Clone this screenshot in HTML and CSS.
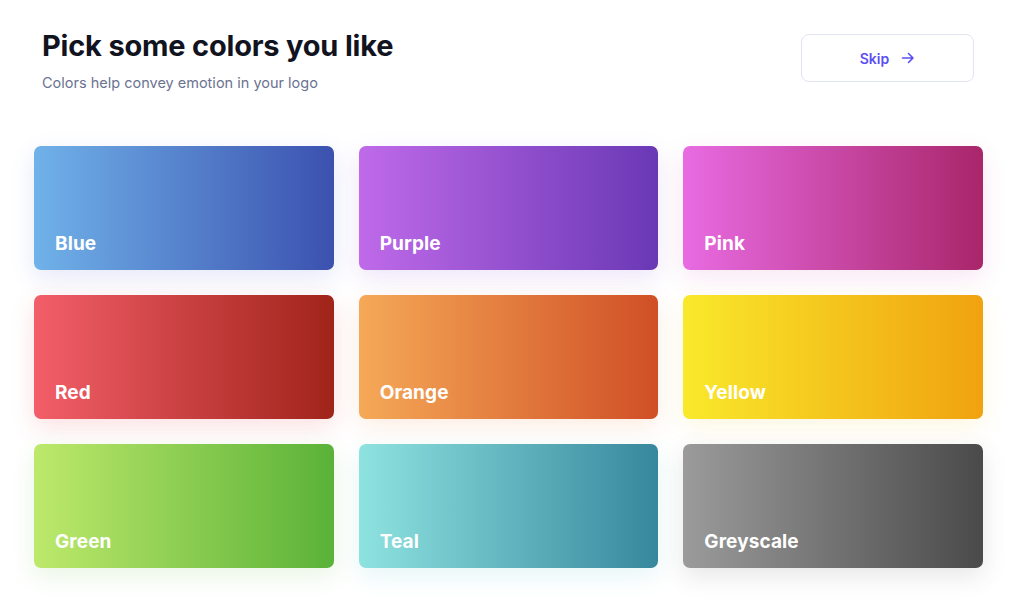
FILE: index.html
```html
<!DOCTYPE html>
<html>
<head>
<meta charset="utf-8">
<link rel="stylesheet" href="styles.css">
</head>
<body>
<div class="page">
  <header class="header">
    <div class="heading">
      <h1 class="title">Pick some colors you like</h1>
      <p class="subtitle">Colors help convey emotion in your logo</p>
    </div>
    <button class="skip">Skip
      <svg class="arrow" width="14" height="14" viewBox="0 0 14 14"><path d="M1.5 7H12M7.5 2.5L12 7L7.5 11.5" fill="none" stroke="currentColor" stroke-width="1.6" stroke-linecap="round" stroke-linejoin="round"/></svg>
    </button>
  </header>
  <div class="grid">
    <div class="card blue"><span>Blue</span></div>
    <div class="card purple"><span>Purple</span></div>
    <div class="card pink"><span>Pink</span></div>
    <div class="card red"><span>Red</span></div>
    <div class="card orange"><span>Orange</span></div>
    <div class="card yellow"><span>Yellow</span></div>
    <div class="card green"><span>Green</span></div>
    <div class="card teal"><span>Teal</span></div>
    <div class="card grey"><span>Greyscale</span></div>
  </div>
</div>
</body>
</html>
```
FILE: styles.css
```css
* { box-sizing: border-box; }
html, body { margin: 0; padding: 0; background: #fff; }
body { font-family: "Inter", "Lato", sans-serif; }
.page { width: 1024px; height: 602px; overflow: hidden; }
.header {
  display: flex;
  justify-content: space-between;
  align-items: flex-start;
  padding: 28px 50px 0 42px;
  height: 146px;
}
.title {
  margin: 0;
  font-size: 29px;
  font-weight: 700;
  color: #11131f;
  letter-spacing: -0.2px;
  line-height: 36px;
}
.subtitle {
  margin: 10px 0 0;
  font-size: 14.5px;
  color: #6b7390;
  line-height: 18px;
}
.skip {
  margin-top: 6px;
  width: 173px;
  height: 48px;
  border: 1px solid #e1e5f0;
  border-radius: 8px;
  background: #fff;
  color: #5a4ff2;
  font-family: inherit;
  font-size: 14px;
  font-weight: 600;
  display: flex;
  align-items: center;
  justify-content: center;
  gap: 12px;
  padding: 0;
}
.arrow { display: block; }
.grid {
  display: grid;
  grid-template-columns: repeat(3, 1fr);
  grid-auto-rows: 124px;
  gap: 25px;
  padding: 0 41px 0 34px;
}
.card {
  border-radius: 7px;
  display: flex;
  align-items: flex-end;
  padding: 0 0 15px 21px;
  color: #fff;
  font-size: 19px;
  font-weight: 700;
  letter-spacing: 0.1px;
}
.blue { background: linear-gradient(90deg, #70b2e9, #3b51af); box-shadow: 0 8px 24px rgba(70, 90, 210, 0.14); }
.purple { background: linear-gradient(90deg, #bf6ae9, #6a38b5); box-shadow: 0 8px 24px rgba(130, 70, 210, 0.14); }
.pink { background: linear-gradient(90deg, #e86be2, #a9266a); box-shadow: 0 8px 24px rgba(200, 60, 160, 0.12); }
.red { background: linear-gradient(90deg, #f35e69, #a0241a); box-shadow: 0 8px 24px rgba(230, 60, 70, 0.16); }
.orange { background: linear-gradient(90deg, #f5a957, #d04f26); box-shadow: 0 8px 24px rgba(235, 130, 60, 0.14); }
.yellow { background: linear-gradient(90deg, #f9e92b, #f0a20f); box-shadow: 0 8px 24px rgba(240, 200, 40, 0.14); }
.green { background: linear-gradient(90deg, #bde96b, #5ab238); box-shadow: 0 8px 24px rgba(110, 190, 80, 0.16); }
.teal { background: linear-gradient(90deg, #8ee3e0, #37879d); box-shadow: 0 8px 24px rgba(80, 190, 200, 0.14); }
.grey { background: linear-gradient(90deg, #9b9b9b, #4a4a4a); box-shadow: 0 8px 24px rgba(80, 80, 80, 0.14); }
```
